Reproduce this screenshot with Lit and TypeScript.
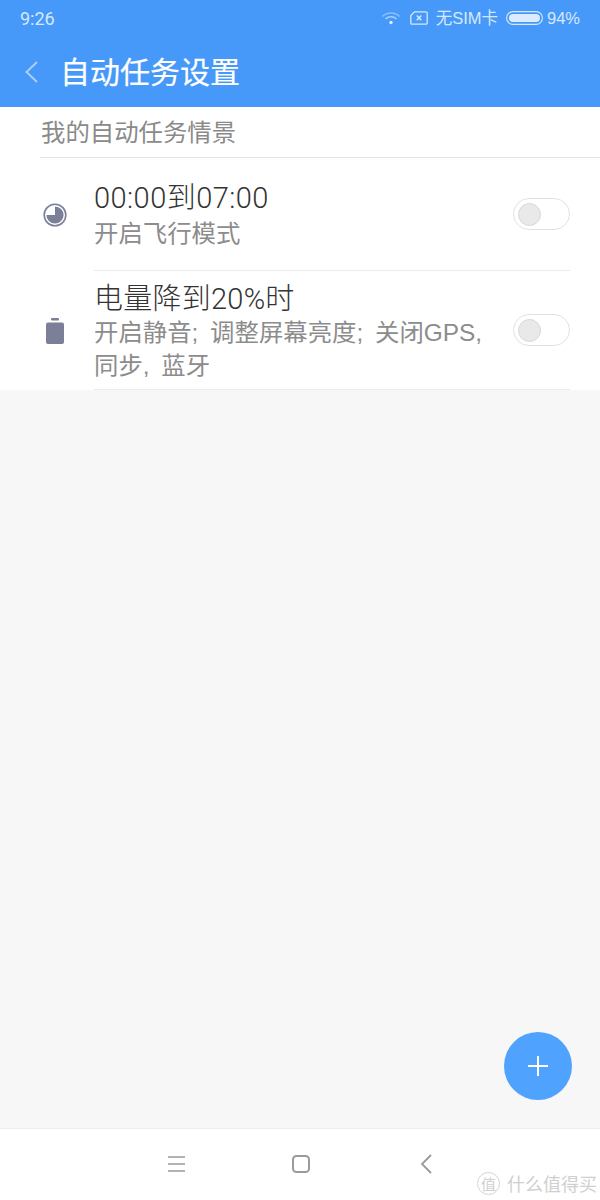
import { css, html, LitElement } from 'lit';
import { customElement } from 'lit/decorators.js';

const CN = css`"Noto Sans CJK SC", "Liberation Sans", sans-serif`;

@customElement('app-toggle')
export class AppToggle extends LitElement {
    static styles = css`
        :host { display: block; flex: none; }
        .track {
            box-sizing: border-box;
            width: 57px;
            height: 32px;
            padding: 4px;
            border: 1px solid #e2e2e2;
            border-radius: 16px;
            background: #fff;
        }
        .knob {
            box-sizing: border-box;
            width: 23px;
            height: 23px;
            border: 1px solid #d8d8d8;
            border-radius: 50%;
            background: #e9e9e9;
        }
    `;

    render() {
        return html`<div class="track"><div class="knob"></div></div>`;
    }
}

@customElement('app-root')
export class AppRoot extends LitElement {
    static styles = css`
        :host {
            display: block;
            position: relative;
            width: 600px;
            height: 1200px;
            overflow: hidden;
            background: #f7f7f7;
            font-family: "Liberation Sans", "Noto Sans CJK SC", sans-serif;
        }
        .page { display: flex; flex-direction: column; height: 1200px; }
        .header { flex: none; height: 107px; background: #4699f8; color: #fff; }
        .status {
            display: flex;
            align-items: center;
            height: 36px;
            padding: 0 20px;
            font-size: 16.5px;
            color: #d6e8fe;
        }
        .time { flex: 1; font-family: Roboto, sans-serif; font-size: 18px; }
        .status-right { display: flex; align-items: center; }
        .wifi { margin-right: 9px; }
        .sim { margin-right: 8px; }
        .carrier { margin: 0 8px 2px 0; }
        .batt { margin-right: 4px; }
        .title-row { display: flex; align-items: center; height: 71px; padding-left: 24px; }
        .back { margin-right: 21px; }
        h1 { margin: 0 0 4px; font: 400 30px/40px ${CN}; -webkit-text-stroke: 0.2px #fff; }

        .list { flex: none; height: 283px; background: #fff; }
        .section {
            box-sizing: border-box;
            height: 51px;
            margin-left: 40px;
            padding-left: 1px;
            border-bottom: 1px solid #e4e4e4;
            font: 400 24.4px/48px ${CN};
            color: #8a8a8a;
        }
        .row { display: flex; padding-right: 30px; }
        .icon { flex: none; display: flex; justify-content: center; width: 94px; padding-left: 15px; box-sizing: border-box; }
        .body { flex: 1; border-bottom: 1px solid #ececec; display: flex; align-items: flex-start; box-sizing: border-box; }
        .text { flex: 1; }
        .row1 { height: 113px; }
        .row1 .icon { padding-top: 45px; }
        .row1 .body { padding-top: 22px; height: 113px; }
        .row1 .name { line-height: 37px; letter-spacing: 0.45px; }
        .row1 app-toggle { margin-top: 18px; }
        .row2 { height: 119px; }
        .row2 .icon { padding-top: 47px; }
        .row2 .body { padding-top: 12px; height: 119px; }
        .row2 .name { line-height: 33px; letter-spacing: 0.25px; }
        .row2 app-toggle { margin-top: 31px; }
        .name { font: 300 29px/30px Roboto, ${CN}; color: #333; white-space: nowrap; }
        .desc { font: 400 24.4px/33px "Liberation Sans", ${CN}; color: #8c8c8c; word-spacing: 5px; white-space: nowrap; }

        .fill { flex: 1; }
        .nav {
            flex: none;
            display: flex;
            align-items: center;
            justify-content: center;
            gap: 95px;
            height: 72px;
            border-top: 1px solid #ededed;
            background: #fff;
            box-sizing: border-box;
            padding: 0 0 2px 1px;
        }
        .nav svg { display: block; width: 30px; height: 30px; }

        .fab {
            position: absolute;
            left: 504px;
            top: 1032px;
            display: flex;
            align-items: center;
            justify-content: center;
            width: 68px;
            height: 68px;
            border-radius: 50%;
            background: #4fa2fd;
        }
        .mark {
            position: absolute;
            left: 477px;
            top: 1169px;
            display: flex;
            align-items: center;
            gap: 7px;
            color: #cfcfcf;
            font: 400 18px/28px ${CN};
            white-space: nowrap;
        }
        .seal {
            box-sizing: border-box;
            width: 23px;
            height: 23px;
            border: 1px solid #d4d4d4;
            border-radius: 50%;
            font-size: 15px;
            line-height: 21px;
            text-align: center;
        }
    `;

    render() {
        return html`
          <div class="page">
            <div class="header">
              <div class="status">
                <span class="time">9:26</span>
                <div class="status-right">
                  <svg class="wifi" width="20" height="14" viewBox="0 0 20 14" fill="none">
                    <path d="M1.5 5.5a12 12 0 0 1 17 0" stroke="#8fc0fa" stroke-width="1.6"/>
                    <path d="M4.5 8a8 8 0 0 1 11 0" stroke="#a8cefb" stroke-width="1.6"/>
                    <circle cx="10" cy="11.5" r="1.7" fill="#e3effe"/>
                  </svg>
                  <svg class="sim" width="18" height="14" viewBox="0 0 18 14" fill="none" stroke="#d6e8fe">
                    <path d="M4.5 .8H16a1.2 1.2 0 0 1 1.2 1.2v10a1.2 1.2 0 0 1-1.2 1.2H2A1.2 1.2 0 0 1 .8 12V4.5z" stroke-width="1.3"/>
                    <path d="M6.8 4.5l4.5 4.8M11.3 4.5L6.8 9.3" stroke-width="1.4"/>
                  </svg>
                  <span class="carrier">无SIM卡</span>
                  <svg class="batt" width="37" height="14" viewBox="0 0 37 14" fill="none">
                    <rect x=".6" y=".6" width="35.8" height="12.8" rx="6.4" stroke="#d6e8fe" stroke-width="1.1"/>
                    <rect x="3" y="3" width="31" height="8" rx="4" fill="#dcebfe"/>
                  </svg>
                  <span>94%</span>
                </div>
              </div>
              <div class="title-row">
                <svg class="back" width="15" height="24" viewBox="0 0 15 24" fill="none">
                  <path d="M13 2L2.5 12 13 22" stroke="#a9cefb" stroke-width="2"/>
                </svg>
                <h1>自动任务设置</h1>
              </div>
            </div>

            <div class="list">
              <div class="section">我的自动任务情景</div>
              <div class="row row1">
                <div class="icon">
                  <svg width="24" height="24" viewBox="0 0 24 24">
                    <circle cx="12" cy="12" r="10.8" fill="none" stroke="#7b7f97" stroke-width="1.6"/>
                    <path d="M12 12V3.4a8.6 8.6 0 1 1-8.6 8.6z" fill="#7b7f97"/>
                  </svg>
                </div>
                <div class="body">
                  <div class="text">
                    <div class="name">00:00到07:00</div>
                    <div class="desc">开启飞行模式</div>
                  </div>
                  <app-toggle></app-toggle>
                </div>
              </div>
              <div class="row row2">
                <div class="icon">
                  <svg width="20" height="26" viewBox="0 0 20 26">
                    <rect x="6" y="0" width="8" height="2.5" rx="1" fill="#7b7f97"/>
                    <rect x="1" y="4.5" width="18" height="21.5" rx="2" fill="#7b7f97"/>
                  </svg>
                </div>
                <div class="body">
                  <div class="text">
                    <div class="name">电量降到20%时</div>
                    <div class="desc">开启静音; 调整屏幕亮度; 关闭GPS,<br>同步, 蓝牙</div>
                  </div>
                  <app-toggle></app-toggle>
                </div>
              </div>
            </div>

            <div class="fill"></div>

            <div class="nav">
              <svg viewBox="0 0 30 30" fill="none" stroke="#9a9a9a" stroke-width="1.6">
                <path d="M7 8h17M7 15h17M7 22h17"/>
              </svg>
              <svg viewBox="0 0 30 30" fill="none" stroke="#9a9a9a" stroke-width="2">
                <rect x="7" y="7" width="16" height="16" rx="3.5"/>
              </svg>
              <svg viewBox="0 0 30 30" fill="none" stroke="#9a9a9a" stroke-width="1.8">
                <path d="M20 6l-9 9 9 9"/>
              </svg>
            </div>
          </div>

          <div class="fab">
            <svg width="22" height="22" viewBox="0 0 22 22" stroke="#fff" stroke-width="2">
              <path d="M11 1v20M1 11h20"/>
            </svg>
          </div>
          <div class="mark"><span class="seal">值</span>什么值得买</div>
        `;
    }
}
